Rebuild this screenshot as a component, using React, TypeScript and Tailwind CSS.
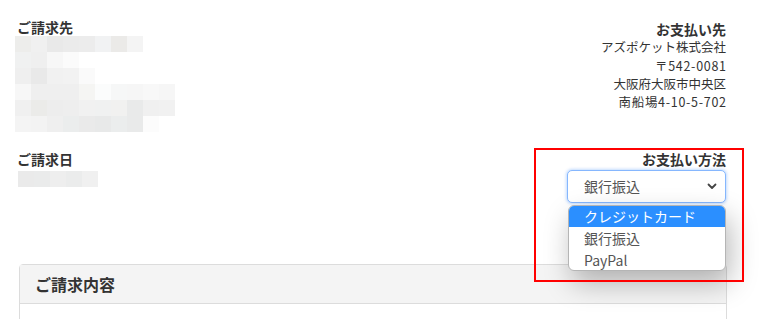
import React from "react";

const rows: string[][] = [
  ["#ededeb", "#f0f0f0", "#e9e9e9", "#ebebeb", "#ececec", "#f1f2f3", "#ebeae8", "#f4f4f4"],
  ["#f0f1f1", "#efefef", "#f7f7f7", "#fbfbfb"],
  ["#efefef", "#e9e9e9", "#f1f1f1", "#f2f2f2", "#fafafa"],
  ["#f7f7f7", "#efefef", "#efefef", "#efefef", "#f5f5f3", "#fbfcfc", "#f6f7f7", "#f6f6f6", "#f8f8f8", "#f6f6f6"],
  ["#f0f0f0", "#ebebe9", "#ededed", "#eeeeee", "#f1f1f1", "#f0f1f1", "#f1f1f0", "#e9eaea", "#f0f0f0", "#f1f1f1"],
  ["#f4f4f4", "#f3f3f3", "#efefef", "#ebeded", "#eaeaea", "#e8e9e9", "#ebeded", "#e9eaea", "#fcfcfc"],
];
const dateRow = ["#eaeaea", "#eaebeb", "#eeeeee", "#ebecec", "#f0f0f0"];

function Cells({ colors }: { colors: string[] }) {
  return (
    <div className="flex">
      {colors.map((c, i) => (
        <div key={i} className="w-[16px] h-[16px]" style={{ backgroundColor: c }} />
      ))}
    </div>
  );
}

export default function App() {
  return (
    <div
      className="relative w-[762px] h-[319px] overflow-hidden bg-white text-[#333]"
      style={{ fontFamily: '"Noto Sans CJK JP", "Noto Sans", sans-serif' }}
    >
      {/* top section */}
      <div className="flex justify-between pl-[15px] pr-[36px] pt-[19px]">
        <div>
          <div className="text-[14px] leading-[17px] font-bold pl-[2px]">ご請求先</div>
          <div className="flex flex-col">
            {rows.map((r, i) => (
              <Cells key={i} colors={r} />
            ))}
          </div>
        </div>
        <div className="text-right text-[12.5px] leading-[18.3px] pt-[1px]">
          <div className="font-bold text-[14px]">お支払い先</div>
          <div>アズポケット株式会社</div>
          <div className="tracking-[0.7px] mr-[-0.7px]">〒542-0081</div>
          <div>大阪府大阪市中央区</div>
          <div className="tracking-[0.7px] mr-[-0.7px]">南船場4-10-5-702</div>
        </div>
      </div>

      {/* second section */}
      <div className="flex justify-between pl-[16px] pr-[36px] mt-[18px]">
        <div>
          <div className="text-[14px] leading-[18px] font-bold pl-[1px]">ご請求日</div>
          <div className="mt-[3px] pl-[2px]">
            <Cells colors={dateRow} />
          </div>
        </div>
        <div className="flex flex-col items-end">
          <div className="text-[14px] leading-[18px] font-bold">お支払い方法</div>
          <div className="mt-[2px] w-[159px] h-[33px] rounded-[5px] border border-[#86b7fe] shadow-[0_0_3px_1px_rgba(13,110,253,0.25)] flex items-center justify-between pl-[16px] pr-[8px] bg-white">
            <span className="text-[14px] text-[#555]">銀行振込</span>
            <svg width="10" height="7" viewBox="0 0 10 7" fill="none">
              <path d="M1.5 1.5 L5 5 L8.5 1.5" stroke="#444" strokeWidth="1.8" strokeLinecap="round" strokeLinejoin="round" />
            </svg>
          </div>
        </div>
      </div>

      {/* card */}
      <div className="ml-[19px] mt-[61px] w-[708px] border border-[#dcdcdc] rounded-t-[4px]">
        <div className="h-[39px] bg-[#f4f4f4] border-b border-[#dcdcdc] flex items-center pl-[15px]">
          <span className="text-[16px] font-bold text-[#333]">ご請求内容</span>
        </div>
        <div className="h-[20px] bg-white" />
      </div>

      {/* dropdown popup */}
      <div className="absolute left-[568px] top-[205px] w-[158px] h-[66px] bg-white rounded-[6px] overflow-hidden border border-[#b5b5b5] shadow-[4px_12px_28px_rgba(0,0,0,0.28)] flex flex-col">
        <div className="h-[21px] bg-[#2b8fff] text-white text-[14px] leading-[21px] pl-[15px]">クレジットカード</div>
        <div className="h-[22px] text-[#555] text-[14px] leading-[22px] pl-[15px]">銀行振込</div>
        <div className="h-[22px] text-[#555] text-[14px] leading-[22px] pl-[15px]">PayPal</div>
      </div>

      {/* red annotation box */}
      <div className="absolute left-[534px] top-[148px] w-[210px] h-[134px] border-2 border-[#ff0000]" />
    </div>
  );
}
